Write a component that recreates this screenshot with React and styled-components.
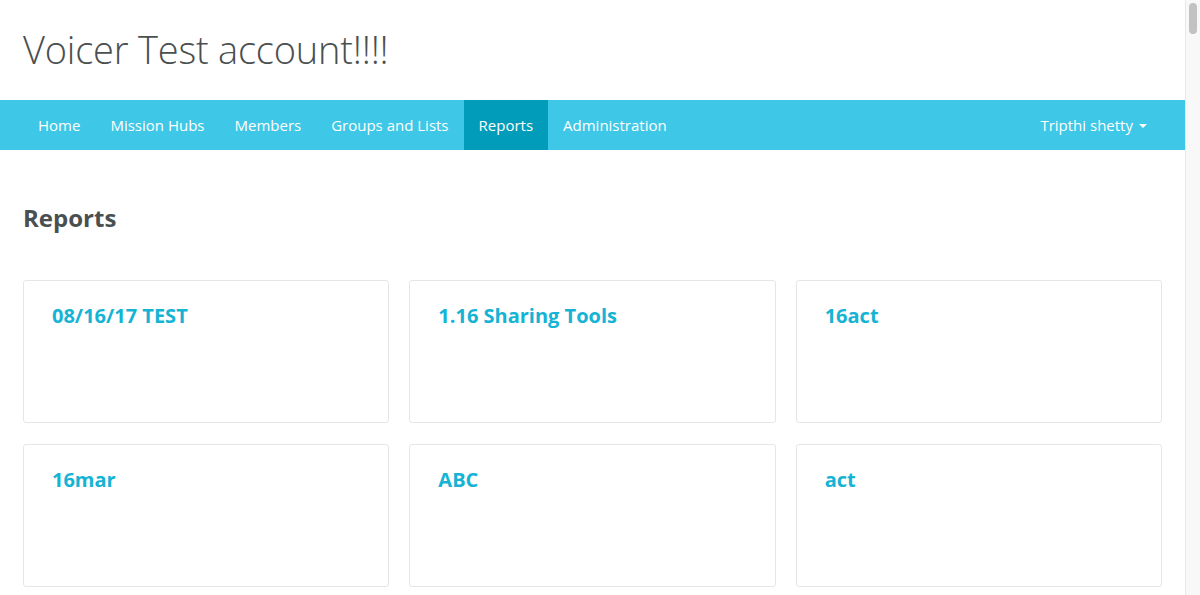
import React from "react";
import styled, { createGlobalStyle } from "styled-components";

const Global = createGlobalStyle`
  html, body { margin: 0; padding: 0; background: #fff; overflow: hidden; }
  body { font-family: "Open Sans", "Noto Sans", sans-serif; color: #4a4f50; }
  * { box-sizing: border-box; }
`;

const Shell = styled.div`
  display: flex;
  height: 100vh;
  overflow: hidden;
`;

const Page = styled.div`
  flex: 1;
  min-width: 0;
`;

const ScrollRail = styled.div`
  width: 15px;
  flex-shrink: 0;
  background: #f8f8f8;
  border-left: 1px solid #e8e8e8;
  padding: 3px 3px 0 3px;
`;

const ScrollThumb = styled.div`
  width: 8px;
  height: 31px;
  border-radius: 4px;
  background: #c2c2c2;
`;

const Header = styled.header`
  height: 100px;
  padding: 0 23px;
  display: flex;
  align-items: center;
`;

const Brand = styled.h1`
  margin: 0;
  font-weight: 300;
  font-size: 38px;
  color: #4a4f50;
  letter-spacing: -0.2px;
  padding-bottom: 2px;
`;

const NavBar = styled.nav`
  height: 50px;
  background: #3ec7e6;
  display: flex;
  justify-content: space-between;
  padding: 0 23px;
`;

const NavList = styled.div`
  display: flex;
`;

const NavItem = styled.a`
  display: flex;
  align-items: center;
  padding: 0 15px;
  font-size: 15px;
  color: #fff;
  text-decoration: none;
  background: ${(p) => (p.$active ? "#009cba" : "transparent")};
`;

const Caret = styled.span`
  display: inline-block;
  margin-left: 6px;
  border-left: 4px solid transparent;
  border-right: 4px solid transparent;
  border-top: 4px solid #fff;
  margin-top: 2px;
`;

const Main = styled.main`
  padding: 50px 23px 30px;
`;

const Heading = styled.h2`
  margin: 0 0 44px;
  font-size: 24px;
  font-weight: 700;
  color: #4a4f50;
  line-height: 36px;
`;

const Grid = styled.div`
  display: grid;
  grid-template-columns: repeat(3, 1fr);
  column-gap: 20px;
  row-gap: 21px;
`;

const Card = styled.a`
  display: block;
  height: 143px;
  border: 1px solid #e6e6e6;
  border-radius: 3px;
  padding: 21px 28px;
  text-decoration: none;
`;

const CardTitle = styled.span`
  font-size: 20px;
  font-weight: 700;
  color: #15b3d4;
  line-height: 27px;
`;

const reports = [
  "08/16/17 TEST",
  "1.16 Sharing Tools",
  "16act",
  "16mar",
  "ABC",
  "act",
];

export default function App() {
  return (
    <Shell>
      <Global />
      <Page>
        <Header>
          <Brand>Voicer Test account!!!!</Brand>
        </Header>
        <NavBar>
          <NavList>
            <NavItem>Home</NavItem>
            <NavItem>Mission Hubs</NavItem>
            <NavItem>Members</NavItem>
            <NavItem>Groups and Lists</NavItem>
            <NavItem $active>Reports</NavItem>
            <NavItem>Administration</NavItem>
          </NavList>
          <NavList>
            <NavItem>
              Tripthi shetty <Caret />
            </NavItem>
          </NavList>
        </NavBar>
        <Main>
          <Heading>Reports</Heading>
          <Grid>
            {reports.map((r) => (
              <Card key={r}>
                <CardTitle>{r}</CardTitle>
              </Card>
            ))}
          </Grid>
        </Main>
      </Page>
      <ScrollRail>
        <ScrollThumb />
      </ScrollRail>
    </Shell>
  );
}
